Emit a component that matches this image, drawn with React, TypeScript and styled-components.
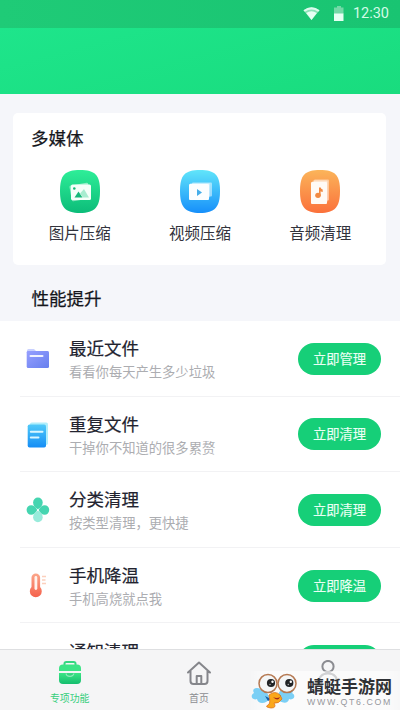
import React from 'react';
import styled, { createGlobalStyle } from 'styled-components';

const GlobalStyle = createGlobalStyle`
  * { box-sizing: border-box; }
  body { margin: 0; background: #fff; font-family: "Noto Sans CJK SC", sans-serif; }
  svg { display: block; flex: none; }
`;

const Screen = styled.div`
  width: 400px;
  height: 710px;
  display: flex;
  flex-direction: column;
  overflow: hidden;
  position: relative;
  background: #f5f6fa;
`;

const StatusBar = styled.div`
  height: 28px;
  flex: none;
  display: flex;
  align-items: center;
  justify-content: flex-end;
  padding-right: 11px;
  background: linear-gradient(90deg, #1fcb77, #19c472);
`;

const Clock = styled.span`
  margin-left: 8px;
  font: 14.5px/28px Roboto, sans-serif;
  color: #d3fbe7;
`;

const Header = styled.div`
  height: 66px;
  flex: none;
  background: linear-gradient(165deg, #1ee58b, #19dc7e);
`;

const Content = styled.main`
  flex: 1;
  min-height: 0;
  overflow: hidden;
`;

const Card = styled.section`
  margin: 19px 14px 0 13px;
  height: 152px;
  padding: 12px 0 0;
  border-radius: 5px;
  background: #fff;
`;

const Heading = styled.h2<{ $section?: boolean }>`
  margin: 0;
  padding-left: ${p => (p.$section ? 31.5 : 18)}px;
  font-size: 17.5px;
  font-weight: 400;
  -webkit-text-stroke: 0.25px #15161c;
  line-height: ${p => (p.$section ? 66 : 26)}px;
  height: ${p => (p.$section ? 56 : 26)}px;
  color: #15161c;
`;

const Tools = styled.div`
  display: flex;
  padding: 19px 0 0 6.5px;
`;

const Tool = styled.div`
  width: 120.3px;
  display: flex;
  flex-direction: column;
  align-items: center;
  font-size: 15.5px;
  line-height: 22px;
  color: #32333c;
  gap: 8px;
`;

const List = styled.div`
  background: #fff;
`;

const Row = styled.div`
  display: flex;
  align-items: center;
  height: 75.6px;
  margin-left: 20px;
  padding: 0 19px 0 5px;
  border-bottom: 1px solid #f2f2f4;

  > svg { margin-top: 2px; }
`;

const RowText = styled.div`
  flex: 1;
  margin-left: 18px;
  padding-top: 3px;
`;

const RowTitle = styled.div`
  font-size: 17.5px;
  -webkit-text-stroke: 0.2px #22232f;
  line-height: 24px;
  color: #22232f;
`;

const RowHint = styled.div`
  font-size: 13.3px;
  line-height: 23px;
  color: #acadb1;
`;

const Action = styled.button`
  width: 83px;
  height: 32px;
  margin-top: 1px;
  padding: 0;
  border: 0;
  border-radius: 16px;
  background: #16cf78;
  color: #eafff4;
  -webkit-text-stroke: 0.15px #eafff4;
  font: 400 13.3px/32px "Noto Sans CJK SC", sans-serif;
`;

const NavBar = styled.nav`
  height: 61px;
  flex: none;
  display: flex;
  padding: 0 7px 0 5px;
  border-top: 1px solid #dedfe1;
  background: #f5f5f6;
`;

const NavItem = styled.div<{ $active?: boolean }>`
  flex: 1;
  display: flex;
  flex-direction: column;
  align-items: center;
  padding-top: 10px;
  gap: 5px;
  font-size: 9.9px;
  line-height: 15px;
  color: ${p => (p.$active ? '#35cf7c' : '#8c8d92')};
`;

const Watermark = styled.div`
  position: absolute;
  left: 249px;
  top: 671px;
  width: 151px;
  height: 39px;
  display: flex;
  background: linear-gradient(90deg, rgba(255,255,255,0), rgba(255,255,255,.6) 12%, rgba(255,255,255,.6) 90%, rgba(255,255,255,.2));
`;

const Brand = styled.div`
  margin-left: 9px;
  padding-top: 4px;
  white-space: nowrap;
`;

const BrandName = styled.div`
  font-size: 17px;
  font-weight: 700;
  line-height: 21px;
  color: #303236;
`;

const BrandUrl = styled.div`
  font: 8.8px/12px "Liberation Sans", sans-serif;
  letter-spacing: 1.65px;
  color: #96979b;
`;

const Squircle = 'M20 0C35 0 40 5 40 21S35 43 20 43 0 37 0 21 5 0 20 0Z';

const PhotoIcon = () => (
  <svg width="40" height="43" viewBox="0 0 40 43">
    <defs><linearGradient id="photo" x2="0" y2="1"><stop stopColor="#2eee98" /><stop offset="1" stopColor="#0cbc79" /></linearGradient></defs>
    <path d={Squircle} fill="url(#photo)" />
    <rect x="10.5" y="14" width="19" height="16" rx="1.5" fill="#fff" opacity=".5" transform="rotate(-10 20 22)" />
    <rect x="11" y="14.5" width="20" height="15.5" rx="1.5" fill="#f4fff9" />
    <circle cx="14.3" cy="18.5" r="1.3" fill="#16b978" />
    <path d="M14.5 27.5 18.5 21.5 22.5 27.5Z" fill="#15b87a" />
    <path d="M20 23.5 24 19 29 27.5H22.8Z" fill="#a8ecd0" />
  </svg>
);

const VideoIcon = () => (
  <svg width="40" height="43" viewBox="0 0 40 43">
    <defs><linearGradient id="video" x2="0" y2="1"><stop stopColor="#61e5fa" /><stop offset="1" stopColor="#168ffa" /></linearGradient></defs>
    <path d={Squircle} fill="url(#video)" />
    <rect x="12" y="12.5" width="20" height="14" rx="1" fill="#fff" opacity=".5" />
    <rect x="10" y="13" width="20" height="14.5" rx="1" fill="#fff" opacity=".35" />
    <rect x="9" y="14" width="20" height="16" rx="1" fill="#fbfeff" />
    <path d="M17 19V26L22 22.5Z" fill="#45aeea" />
  </svg>
);

const AudioIcon = () => (
  <svg width="40" height="43" viewBox="0 0 40 43">
    <defs><linearGradient id="audio" x2="0" y2="1"><stop stopColor="#fbb45a" /><stop offset="1" stopColor="#fb713b" /></linearGradient></defs>
    <path d={Squircle} fill="url(#audio)" />
    <rect x="14" y="9.5" width="15" height="21" rx="1" fill="#fff" opacity=".45" />
    <rect x="12.5" y="10.5" width="15" height="21.5" rx="1" fill="#fff" opacity=".5" />
    <rect x="11" y="12" width="16" height="22" rx="1" fill="#fffaf5" />
    <ellipse cx="18" cy="25.3" rx="2.8" ry="2.6" fill="#f28a42" />
    <path d="M19 17.5H20.7Q20.8 19 22.7 19.5V22Q21.5 22 20.6 21.2V25.5H19Z" fill="#f28a42" />
  </svg>
);

const FolderIcon = () => (
  <svg width="26" height="30" viewBox="0 0 26 30">
    <defs><linearGradient id="folder" x2="1" y2="1"><stop stopColor="#969fff" /><stop offset="1" stopColor="#667fee" /></linearGradient></defs>
    <path d="M2 12V6.5Q2 5 3.5 5H9L11 7H22Q24 7 24 9V12Z" fill="#c8d0ff" />
    <path d="M1.7 8.2Q1.7 7 3 7H22.5Q24 7 24 8.5V22.5Q24 24 22.5 24H3.2Q1.7 24 1.7 22.5Z" fill="url(#folder)" />
    <path d="M5.5 12H17.5" stroke="#f0f2ff" strokeWidth="2" strokeLinecap="round" />
  </svg>
);

const CopiesIcon = () => (
  <svg width="26" height="30" viewBox="0 0 26 30">
    <defs><linearGradient id="copies" x2="0" y2="1"><stop stopColor="#50caf9" /><stop offset="1" stopColor="#158df5" /></linearGradient></defs>
    <rect x="5" y="2.5" width="18" height="22.5" rx="1.8" fill="#b0eefb" />
    <rect x="2.7" y="4.5" width="18.3" height="23" rx="1.8" fill="url(#copies)" />
    <path d="M5.8 11.8H17.5M5.8 17.6H13.5" stroke="#d9f6ff" strokeWidth="2" strokeLinecap="round" />
  </svg>
);

const CloverIcon = () => (
  <svg width="26" height="30" viewBox="0 0 26 30">
    <path d="M12.8 14.2C10 13.3 8.1 10.6 8.1 7.6A4.8 5 0 0 1 17.7 7.6C17.7 10.6 15.6 13.3 12.8 14.2Z" fill="#45d5b0" />
    <path d="M12.2 15C10.8 18 8.6 19.8 6.2 19.8A4.6 4.8 0 0 1 6.2 10.2C8.6 10.2 10.8 12 12.2 15Z" fill="#45d5b0" />
    <path d="M13.6 15C15 18 17.2 19.8 19.6 19.8A4.6 4.8 0 0 0 19.6 10.2C17.2 10.2 15 12 13.6 15Z" fill="#45d5b0" />
    <path d="M12.8 15.8C10 16.7 8.1 19.4 8.1 22.2A4.8 5 0 0 0 17.7 22.2C17.7 19.4 15.6 16.7 12.8 15.8Z" fill="#98ebdb" />
  </svg>
);

const ThermometerIcon = () => (
  <svg width="26" height="30" viewBox="0 0 26 30">
    <defs><linearGradient id="heat" x2="0" y2="1"><stop stopColor="#fba68a" /><stop offset="1" stopColor="#f5624c" /></linearGradient></defs>
    <path d="M6.5 6.5A4.3 4 0 0 1 15.1 6.5V16A6 6 0 1 1 6.5 16Z" fill="url(#heat)" />
    <path d="M10.9 6.5V17.5" stroke="#fff3ed" strokeWidth="2.8" strokeLinecap="round" />
    <path d="M17 5.5H21M17 9H20.5M17 12.5H21" stroke="#fcd0bd" strokeWidth="1.6" />
  </svg>
);

const BriefcaseIcon = () => (
  <svg width="24" height="26" viewBox="0 0 24 26">
    <defs><linearGradient id="case" x2="0" y2="1"><stop stopColor="#3be585" /><stop offset="1" stopColor="#15bd6e" /></linearGradient></defs>
    <path d="M6.5 5V3.5Q6.5 2 8.3 2H15.7Q17.5 2 17.5 3.5V5" fill="none" stroke="#35d880" strokeWidth="2" />
    <path d="M1 11V8.4Q1 4.6 5 4.6H19Q23 4.6 23 8.4V11Z" fill="#3ce486" />
    <path d="M1 13H23V20Q23 24 19 24H5Q1 24 1 20Z" fill="url(#case)" />
    <path d="M8.2 13.5A3.8 2.8 0 0 0 15.8 13.5" fill="#35d27e" stroke="#8eeab8" strokeWidth="1.2" />
  </svg>
);

const HomeIcon = () => (
  <svg width="26" height="26" viewBox="-1 0 26 26" fill="none" stroke="#85868b" strokeWidth="2" strokeLinecap="round" strokeLinejoin="round">
    <path d="M1 12.5 12 2.5 23 12.5M3.5 11V21Q3.5 24 6.5 24H17.5Q20.5 24 20.5 21V11M9.7 24V16H14.3V24" />
  </svg>
);

const PersonIcon = () => (
  <svg width="24" height="26" viewBox="0 0 24 26" fill="none" stroke="#8b8c91" strokeWidth="2">
    <circle cx="12" cy="6.5" r="5.6" />
    <path d="M2.5 24C2.5 17 6 13.5 12 13.5S21.5 17 21.5 24" />
  </svg>
);

const Dragonfly = () => (
  <svg width="49" height="39" viewBox="0 0 49 39">
    <path d="M17 20C8 15 2 17 5 22C0 25 4 30 8 28C9 34 18 33 21 27ZM31 20C40 15 47 17 43 22C48 25 44 30 40 28C39 34 31 32 27 27Z" fill="#7bcff5" />
    <path d="M16 25 22 28 19 30Z" fill="#175da6" /><path d="M32 24 27 28 31 29Z" fill="#175da6" />
    <path d="M20 24Q26 19 31 24L33 28Q30 33 25 32Q28 37 22 37Q15 36 19 34Q22 33 20 24Z" fill="#faa71b" stroke="#df741a" strokeWidth=".8" />
    <path d="M24 26Q28 28 31 26Q29 31 24 26Z" fill="#a5291a" />
    <circle cx="19" cy="12.5" r="9" fill="#f4f6f7" stroke="#b57952" strokeWidth="1.5" />
    <circle cx="38" cy="12.5" r="9" fill="#f4f6f7" stroke="#b57952" strokeWidth="1.5" />
    <circle cx="22" cy="12" r="4.1" fill="#222426" /><circle cx="40.3" cy="12" r="4.1" fill="#222426" />
    <circle cx="23.5" cy="10.8" r="1.2" fill="#fff" /><circle cx="41.8" cy="10.8" r="1.2" fill="#fff" />
    <circle cx="21" cy="13.5" r=".8" fill="#aaa" /><circle cx="39.3" cy="13.5" r=".8" fill="#aaa" />
  </svg>
);

const tools = [
  { label: '图片压缩', icon: <PhotoIcon /> },
  { label: '视频压缩', icon: <VideoIcon /> },
  { label: '音频清理', icon: <AudioIcon /> },
];

const rows = [
  { title: '最近文件', hint: '看看你每天产生多少垃圾', action: '立即管理', icon: <FolderIcon /> },
  { title: '重复文件', hint: '干掉你不知道的很多累赘', action: '立即清理', icon: <CopiesIcon /> },
  { title: '分类清理', hint: '按类型清理，更快捷', action: '立即清理', icon: <CloverIcon /> },
  { title: '手机降温', hint: '手机高烧就点我', action: '立即降温', icon: <ThermometerIcon /> },
  { title: '通知清理', hint: '', action: '', icon: <svg width="26" height="30" /> },
];

export default function App() {
  return (
    <Screen>
      <GlobalStyle />
      <StatusBar>
        <svg width="42" height="16" viewBox="0 0 42 16">
          <path d="M.5 4.2Q8.5-1.6 16.5 4.2L8.5 14Z" fill="#8be3b8" />
          <path d="M.5 4.2Q8.5-1.6 16.5 4.2L15.2 5.8Q8.5 1 1.8 5.8Z" fill="#dcfbed" />
          <path d="M3.2 7Q8.5 3.5 13.8 7L8.5 14Z" fill="#e6fff3" />
          <path d="M31 1.5H34V0H38V1.5H40.5V8H31Z" fill="#73d9a7" />
          <path d="M31 7.5H40.5V15H31Z" fill="#e6fff3" />
        </svg>
        <Clock>12:30</Clock>
      </StatusBar>
      <Header />
      <Content>
        <Card>
          <Heading>多媒体</Heading>
          <Tools>
            {tools.map(t => <Tool key={t.label}>{t.icon}{t.label}</Tool>)}
          </Tools>
        </Card>
        <Heading $section>性能提升</Heading>
        <List>
          {rows.map(r => (
            <Row key={r.title}>
              {r.icon}
              <RowText>
                <RowTitle>{r.title}</RowTitle>
                <RowHint>{r.hint || '\u00a0'}</RowHint>
              </RowText>
              <Action>{r.action}</Action>
            </Row>
          ))}
        </List>
      </Content>
      <NavBar>
        <NavItem $active><BriefcaseIcon />专项功能</NavItem>
        <NavItem><HomeIcon />首页</NavItem>
        <NavItem><PersonIcon /></NavItem>
      </NavBar>
      <Watermark>
        <Dragonfly />
        <Brand>
          <BrandName>蜻蜓手游网</BrandName>
          <BrandUrl>WWW.QT6.COM</BrandUrl>
        </Brand>
      </Watermark>
    </Screen>
  );
}
